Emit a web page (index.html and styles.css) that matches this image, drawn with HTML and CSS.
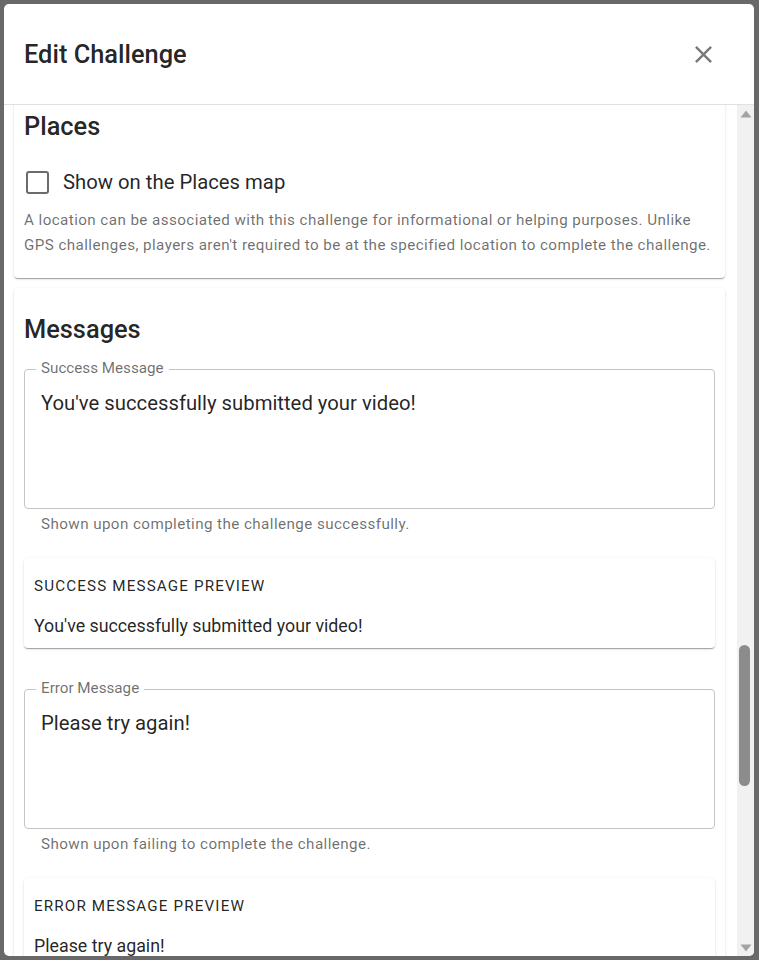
FILE: index.html
```html
<!DOCTYPE html>
<html lang="en">
<head>
<meta charset="utf-8">
<title>Edit Challenge</title>
<link rel="stylesheet" href="styles.css">
</head>
<body>
<div class="dialog">
  <header class="dialog-header">
    <h1 class="dialog-title">Edit Challenge</h1>
    <button class="close-btn" aria-label="Close">
      <svg viewBox="0 0 24 24" width="29" height="29"><path d="M19 6.41 17.59 5 12 10.59 6.41 5 5 6.41 10.59 12 5 17.59 6.41 19 12 13.41 17.59 19 19 17.59 13.41 12z"/></svg>
    </button>
  </header>
  <div class="dialog-body">
    <div class="content">
      <section class="card card-places">
        <h2 class="card-title">Places</h2>
        <label class="check-row">
          <span class="check-box"></span>
          <span class="check-label">Show on the Places map</span>
        </label>
        <p class="description">A location can be associated with this challenge for informational or helping purposes. Unlike GPS challenges, players aren't required to be at the specified location to complete the challenge.</p>
      </section>
      <section class="card card-messages">
        <h2 class="card-title">Messages</h2>
        <div class="field">
          <span class="field-label">Success Message</span>
          <div class="field-input">You've successfully submitted your video!</div>
        </div>
        <p class="helper">Shown upon completing the challenge successfully.</p>
        <div class="preview">
          <div class="overline">Success Message Preview</div>
          <div class="preview-body">You've successfully submitted your video!</div>
        </div>
        <div class="field field-next">
          <span class="field-label">Error Message</span>
          <div class="field-input">Please try again!</div>
        </div>
        <p class="helper">Shown upon failing to complete the challenge.</p>
        <div class="preview">
          <div class="overline">Error Message Preview</div>
          <div class="preview-body">Please try again!</div>
        </div>
      </section>
    </div>
    <div class="scrollbar">
      <div class="sb-arrow"><svg viewBox="0 0 12 8" width="12" height="8"><path d="M6 0.5 L11.5 7.5 L0.5 7.5 Z"/></svg></div>
      <div class="sb-track"><div class="sb-thumb"></div></div>
      <div class="sb-arrow"><svg viewBox="0 0 12 8" width="12" height="8"><path d="M0.5 0.5 L11.5 0.5 L6 7.5 Z"/></svg></div>
    </div>
  </div>
</div>
</body>
</html>
```
FILE: styles.css
```css
* { box-sizing: border-box; }
html, body { margin: 0; padding: 0; }
body {
  width: 759px;
  height: 960px;
  background: #696969;
  padding: 4px 5px 4px 4px;
  font-family: Roboto, "Noto Sans", Arial, sans-serif;
  color: rgba(0,0,0,0.87);
  overflow: hidden;
}
.dialog {
  width: 750px;
  height: 952px;
  background: #fff;
  border-radius: 5px;
  display: flex;
  flex-direction: column;
  overflow: hidden;
}
.dialog-header {
  height: 101px;
  flex: none;
  border-bottom: 1px solid #e0e0e0;
  display: flex;
  align-items: center;
  justify-content: space-between;
  padding: 0 36px 0 20px;
}
.dialog-title {
  margin: 0;
  font-size: 25.4px;
  font-weight: 500;
  line-height: 32px;
  color: rgba(0,0,0,0.87);
}
.close-btn {
  border: 0;
  background: none;
  padding: 0;
  width: 29px;
  height: 29px;
  display: flex;
  fill: #7a7a7a;
}
.dialog-body {
  flex: 1;
  min-height: 0;
  display: flex;
}
.content {
  flex: 1;
  min-width: 0;
  overflow: hidden;
  padding: 0 12px 0 10px;
}
.card {
  background: #fff;
  border-radius: 4px;
  box-shadow: 0 2px 1px -1px rgba(0,0,0,.2), 0 1px 1px 0 rgba(0,0,0,.14), 0 1px 3px 0 rgba(0,0,0,.12);
  padding: 15px 10px 20px 10px;
}
.card-places { margin-top: -10px; }
.card-messages { margin-top: 10px; padding-top: 25px; }
.card-title {
  margin: 0;
  font-size: 25.4px;
  font-weight: 500;
  line-height: 32px;
}
.check-row {
  display: flex;
  align-items: center;
  height: 44px;
  margin-top: 18px;
}
.check-box {
  width: 23px;
  height: 23px;
  border: 2.5px solid #6b6b6b;
  border-radius: 3px;
  margin-left: 2px;
}
.check-label {
  margin-left: 14px;
  font-size: 20.3px;
  line-height: 30px;
  color: rgba(0,0,0,0.87);
}
.description {
  margin: 4px 0 0;
  font-size: 15.2px;
  line-height: 25px;
  letter-spacing: 0.42px;
  color: rgba(0,0,0,0.58);
}
.field {
  position: relative;
  margin-top: 24px;
  height: 140px;
  border: 1px solid #c4c4c4;
  border-radius: 4px;
  padding: 18px 16px 0 16px;
}
.field-next { margin-top: 41px; }
.field-label {
  position: absolute;
  top: -12px;
  left: 11px;
  padding: 0 5px;
  background: #fff;
  font-size: 15.2px;
  line-height: 20px;
  color: rgba(0,0,0,0.58);
}
.field-input {
  font-size: 20.3px;
  line-height: 30px;
  color: rgba(0,0,0,0.87);
}
.helper {
  margin: 5px 0 0 17px;
  font-size: 15.2px;
  line-height: 20px;
  letter-spacing: 0.42px;
  color: rgba(0,0,0,0.58);
}
.preview {
  margin-top: 24px;
  border-radius: 4px;
  background: #fff;
  box-shadow: 0 2px 1px -1px rgba(0,0,0,.2), 0 1px 1px 0 rgba(0,0,0,.14), 0 1px 3px 0 rgba(0,0,0,.12);
  padding: 10px 10px;
}
.overline {
  font-size: 15.2px;
  line-height: 36px;
  letter-spacing: 1.15px;
  text-transform: uppercase;
  color: rgba(0,0,0,0.87);
}
.preview-body {
  margin-top: 10px;
  font-size: 17.8px;
  line-height: 24px;
  color: rgba(0,0,0,0.87);
}
.scrollbar {
  width: 17px;
  flex: none;
  background: #f1f1f1;
  display: flex;
  flex-direction: column;
}
.sb-arrow {
  height: 17px;
  flex: none;
  display: flex;
  align-items: center;
  justify-content: center;
  fill: #a3a3a3;
}
.sb-track {
  flex: 1;
}
.sb-thumb {
  margin-top: 523px;
  margin-left: 2px;
  width: 11px;
  height: 141px;
  border-radius: 6px;
  background: #8c8c8c;
}
```
